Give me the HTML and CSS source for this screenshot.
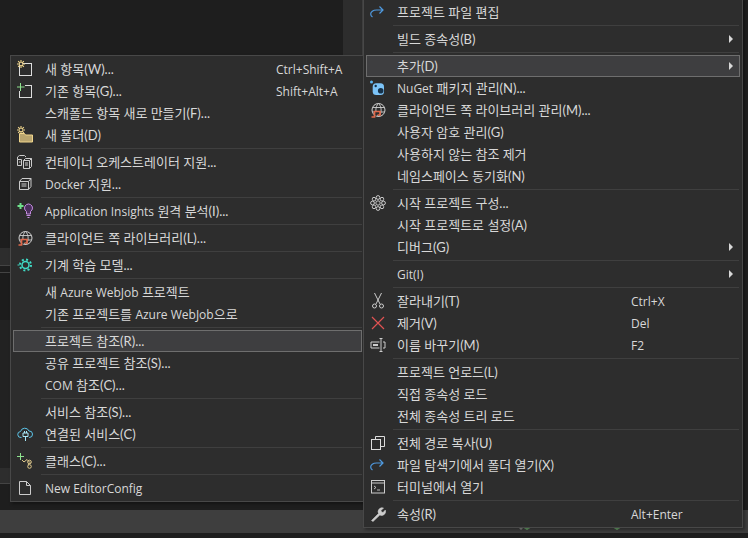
FILE: index.html
```html
<!DOCTYPE html>
<html lang="ko">
<head>
<meta charset="utf-8">
<title>프로젝트 컨텍스트 메뉴</title>
<link rel="stylesheet" href="styles.css">
</head>
<body>
<svg class="defs" width="0" height="0" aria-hidden="true">
  <defs>
    <symbol id="spark" viewBox="0 0 7 7"><path d="M3.500 0v7M0 3.500h7M1 1l5 5M6 1l-5 5" stroke="#f0d58c" stroke-width="1" fill="none"/><circle cx="3.500" cy="3.500" r="1.100" fill="#2d2d2d"/></symbol>
    <symbol id="arrow" viewBox="0 0 16 16"><path d="M13 6H6.500C3 6 .7 8 .7 10c0 1.300.7 2.300 1.800 3M9.500 2.500L13 6 9.500 9.500" fill="none" stroke="#4f9ae0" stroke-width="1.200"/></symbol>
    <symbol id="client" viewBox="0 0 16 16"><circle cx="8.500" cy="8" r="6.500" fill="none" stroke="#d0d0d0"/><path d="M2.500 5.500h12M2.500 10h12M8.500 1.500c-3.500 3-3.500 10 0 13M8.500 1.500c3.500 3 3.500 10 0 13" fill="none" stroke="#d0d0d0" stroke-width=".9"/><path d="M1.500 15h3V9.500H10V13H7.500" fill="#2d2d2d" stroke="#e0684a" stroke-width="1.700"/></symbol>
    <symbol id="ring" viewBox="0 0 4 4"><circle cx="2" cy="2" r="1.500" fill="none" stroke="#ccc" stroke-width=".8"/></symbol>
  </defs>
</svg>
<div class="desk">
  <div class="top">
    <div class="top-dark"></div>
    <div class="top-strip"></div>
  </div>
  <div class="edge">
    <div class="e-a"></div><div class="e-b"></div><div class="e-c"></div><div class="e-d"></div><div class="e-a e-e"></div>
  </div>
  <div class="band"><i class="mark gray"></i><i class="mark green"></i><i class="mark green m2"></i></div>
</div>

<nav class="menu menu-left">
  <div class="row"><span class="ico"><svg width="16" height="16" viewBox="0 0 16 16"><rect x="2.500" y="2.500" width="12" height="12" fill="#2d2d2d" stroke="#ddd"/><use href="#spark" x="0" y="-1" width="8" height="8"/></svg></span><span class="lbl">새 항목(W)...</span><span class="key lat">Ctrl+Shift+A</span></div>
  <div class="row"><span class="ico"><svg width="16" height="16" viewBox="0 0 16 16"><rect x="2.500" y="2.500" width="12" height="12" fill="#2d2d2d" stroke="#ddd"/><rect x="0" y="1" width="8" height="7" fill="#2d2d2d"/><path d="M3.500 0v8M0 4h7.500" stroke="#8ee28e" stroke-width="1" fill="none"/></svg></span><span class="lbl">기존 항목(G)...</span><span class="key lat">Shift+Alt+A</span></div>
  <div class="row"><span class="ico"></span><span class="lbl">스캐폴드 항목 새로 만들기(F)...</span></div>
  <div class="row"><span class="ico"><svg width="16" height="16" viewBox="0 0 16 16"><path d="M2.500 6.500h5l1 1.500h7v7h-13z" fill="#b9a56f" stroke="#f0d58c"/><use href="#spark" x="0" y="-1" width="8" height="8"/></svg></span><span class="lbl">새 폴더(D)</span></div>
  <div class="sep"></div>
  <div class="row"><span class="ico"><svg width="16" height="16" viewBox="0 0 16 16" fill="none" stroke="#ccc"><path d="M.5 5.500V3l2-1.500h5l1.500 1.500"/><path d="M.5 5.500h4v6h-4zM6.500 6.500h6v8h-6zM6.500 6.500l2-2h6v8l-2 2M12.500 6.500l2-2M8 9h3M8 11h3M2 8h1.500"/></svg></span><span class="lbl">컨테이너 오케스트레이터 지원...</span></div>
  <div class="row"><span class="ico"><svg width="16" height="16" viewBox="0 0 16 16" fill="none" stroke="#ccc"><path d="M2.500 5.500h9v8h-9zM2.500 5.500l2.500-3h9v8l-2.500 3M11.500 5.500l2.500-3M4.500 8h5M4.500 10h5"/></svg></span><span class="lbl"><span class="lat">Docker</span> 지원...</span></div>
  <div class="sep"></div>
  <div class="row"><span class="ico"><svg width="16" height="16" viewBox="0 0 16 16"><path d="M3.500 0v6M.5 3h6" stroke="#6fe08c" stroke-width="2" fill="none"/><path d="M7.500 5a4 4 0 1 1 6 3.500v2.500h-4V8.500A4 4 0 0 1 7.500 5z" fill="#4a2f5c" stroke="#c48be0"/><path d="M9.500 12.500h4M10.500 14.500h2" stroke="#c48be0"/></svg></span><span class="lbl"><span class="lat">Application Insights</span> 원격 분석(I)...</span></div>
  <div class="sep"></div>
  <div class="row"><span class="ico"><svg width="16" height="16"><use href="#client"/></svg></span><span class="lbl">클라이언트 쪽 라이브러리(L)...</span></div>
  <div class="sep"></div>
  <div class="row"><span class="ico"><svg width="16" height="16" viewBox="0 0 16 16" fill="none" stroke="#3fd9c4"><circle cx="8.500" cy="8" r="5.500" stroke-width="2" stroke-dasharray="2 2.300"/><circle cx="8.500" cy="8" r="3.500" stroke-width="1.500"/><path d="M.5 8h2"/></svg></span><span class="lbl">기계 학습 모델...</span></div>
  <div class="sep"></div>
  <div class="row"><span class="ico"></span><span class="lbl">새 <span class="lat">Azure WebJob</span> 프로젝트</span></div>
  <div class="row"><span class="ico"></span><span class="lbl">기존 프로젝트를 <span class="lat">Azure WebJob</span>으로</span></div>
  <div class="sep"></div>
  <div class="row active"><span class="ico"></span><span class="lbl">프로젝트 참조(R)...</span></div>
  <div class="row"><span class="ico"></span><span class="lbl">공유 프로젝트 참조(S)...</span></div>
  <div class="row"><span class="ico"></span><span class="lbl"><span class="lat">COM</span> 참조(C)...</span></div>
  <div class="sep"></div>
  <div class="row"><span class="ico"></span><span class="lbl">서비스 참조(S)...</span></div>
  <div class="row"><span class="ico"><svg width="16" height="16" viewBox="0 0 16 16"><path d="M4.500 11.500H4a3 3 0 0 1-.5-6A4.500 4.500 0 0 1 12 5a3.200 3.200 0 0 1 .5 6.500H12" fill="none" stroke="#5cc4e8"/><path d="M6 7v3.500h5V7zM7.500 5v2M9.500 5v2M8.500 10.500V15" fill="none" stroke="#a8e8f8"/></svg></span><span class="lbl">연결된 서비스(C)</span></div>
  <div class="sep"></div>
  <div class="row"><span class="ico"><svg width="16" height="16" viewBox="0 0 16 16"><path d="M3.500 0v7M0 3.500h7" stroke="#8ee28e" fill="none"/><path d="M5 7l2 2 3-2.500M10 6.500l3 3-2 2.500" fill="none" stroke="#e0c98c"/><circle cx="12.500" cy="9" r="1.800" fill="none" stroke="#e0c98c"/><circle cx="12.500" cy="13.500" r="1.800" fill="none" stroke="#e0c98c"/></svg></span><span class="lbl">클래스(C)...</span></div>
  <div class="sep"></div>
  <div class="row"><span class="ico"><svg width="16" height="16" viewBox="0 0 16 16"><path d="M2.500 1.500h7l4 4v9h-11z" fill="#2d2d2d" stroke="#ccc"/><path d="M9.500 1.500v4h4" fill="none" stroke="#ccc"/></svg></span><span class="lbl lat">New EditorConfig</span></div>
</nav>

<nav class="menu menu-right">
  <div class="row"><span class="ico"><svg width="16" height="16"><use href="#arrow"/></svg></span><span class="lbl">프로젝트 파일 편집</span></div>
  <div class="sep"></div>
  <div class="row"><span class="ico"></span><span class="lbl">빌드 종속성(B)</span><i class="more"></i></div>
  <div class="sep"></div>
  <div class="row active"><span class="ico"></span><span class="lbl">추가(D)</span><i class="more"></i></div>
  <div class="row"><span class="ico"><svg width="16" height="16" viewBox="0 0 16 16"><circle cx="1.500" cy="2" r="1.500" fill="#5cb4f0"/><rect x="2.700" y="3.300" width="11.300" height="11.700" rx="3.500" fill="#7cc4f8"/><circle cx="10.700" cy="10.700" r="2.800" fill="#16324a"/><circle cx="5.700" cy="6" r="1.200" fill="#16324a"/></svg></span><span class="lbl"><span class="lat">NuGet</span> 패키지 관리(N)...</span></div>
  <div class="row"><span class="ico"><svg width="16" height="16"><use href="#client"/></svg></span><span class="lbl">클라이언트 쪽 라이브러리 관리(M)...</span></div>
  <div class="row"><span class="ico"></span><span class="lbl">사용자 암호 관리(G)</span></div>
  <div class="row"><span class="ico"></span><span class="lbl">사용하지 않는 참조 제거</span></div>
  <div class="row"><span class="ico"></span><span class="lbl">네임스페이스 동기화(N)</span></div>
  <div class="sep"></div>
  <div class="row"><span class="ico"><svg width="16" height="16" viewBox="0 0 16 16"><use href="#ring" x="5.500" y="0" width="5" height="5"/><use href="#ring" x="9.500" y="1.700" width="5" height="5"/><use href="#ring" x="11" y="5.500" width="5" height="5"/><use href="#ring" x="9.500" y="9.300" width="5" height="5"/><use href="#ring" x="5.500" y="11" width="5" height="5"/><use href="#ring" x="1.500" y="9.300" width="5" height="5"/><use href="#ring" x="0" y="5.500" width="5" height="5"/><use href="#ring" x="1.500" y="1.700" width="5" height="5"/><circle cx="8" cy="8" r="2.200" fill="none" stroke="#ccc"/></svg></span><span class="lbl">시작 프로젝트 구성...</span></div>
  <div class="row"><span class="ico"></span><span class="lbl">시작 프로젝트로 설정(A)</span></div>
  <div class="row"><span class="ico"></span><span class="lbl">디버그(G)</span><i class="more"></i></div>
  <div class="sep"></div>
  <div class="row"><span class="ico"></span><span class="lbl lat">Git(I)</span><i class="more"></i></div>
  <div class="sep"></div>
  <div class="row"><span class="ico"><svg width="16" height="16" viewBox="0 0 16 16" fill="none" stroke="#ccc"><path d="M4.500 0l5.500 11M11.500 0L6 11"/><circle cx="4.500" cy="13" r="2"/><circle cx="11.500" cy="13" r="2"/></svg></span><span class="lbl">잘라내기(T)</span><span class="key lat">Ctrl+X</span></div>
  <div class="row"><span class="ico"><svg width="16" height="16" viewBox="0 0 16 16"><path d="M2 2l12 12M14 2L2 14" stroke="#e05252" stroke-width="1.200" fill="none"/></svg></span><span class="lbl">제거(V)</span><span class="key lat">Del</span></div>
  <div class="row"><span class="ico"><svg width="16" height="16" viewBox="0 0 16 16" fill="none" stroke="#ccc"><path d="M9.500 5H1v6h8.500M13 5h2v6h-2"/><path d="M3 8h5" stroke-width="2"/><path d="M9.500 1.500h3M9.500 14.500h3M11 1.500v13"/></svg></span><span class="lbl">이름 바꾸기(M)</span><span class="key lat">F2</span></div>
  <div class="sep"></div>
  <div class="row"><span class="ico"></span><span class="lbl">프로젝트 언로드(L)</span></div>
  <div class="row"><span class="ico"></span><span class="lbl">직접 종속성 로드</span></div>
  <div class="row"><span class="ico"></span><span class="lbl">전체 종속성 트리 로드</span></div>
  <div class="sep"></div>
  <div class="row"><span class="ico"><svg width="16" height="16" viewBox="0 0 16 16" fill="none" stroke="#ddd"><path d="M5.500 4.500v-3h9v10h-4"/><rect x="1.500" y="4.500" width="9" height="10" fill="#2d2d2d"/></svg></span><span class="lbl">전체 경로 복사(U)</span></div>
  <div class="row"><span class="ico"><svg width="16" height="16"><use href="#arrow"/></svg></span><span class="lbl">파일 탐색기에서 폴더 열기(X)</span></div>
  <div class="row"><span class="ico"><svg width="16" height="16" viewBox="0 0 16 16" fill="none" stroke="#ccc"><rect x="1.500" y="1.500" width="13" height="12.500"/><path d="M1.500 4h13"/><path d="M4 7l2 1.500L4 10M7 11h3" stroke-width=".9"/></svg></span><span class="lbl">터미널에서 열기</span></div>
  <div class="sep"></div>
  <div class="row"><span class="ico"><svg width="16" height="16" viewBox="0 0 16 16"><path d="M1.500 14.500l7-7a4 4 0 0 1 5-5.500L11 4.500l.5 1.500 1.500.5 2.300-2.400a4 4 0 0 1-5.500 5L3 15.500z" fill="#ccc" stroke="#ccc" stroke-width=".6"/></svg></span><span class="lbl">속성(R)</span><span class="key lat">Alt+Enter</span></div>
</nav>
</body>
</html>
```
FILE: styles.css
```css
html, body { margin: 0; padding: 0; height: 100%; }
body {
  width: 748px;
  height: 538px;
  overflow: hidden;
  position: relative;
  background: #1e1e1e;
  color: #d8d8d8;
  font-family: "Lato", "Noto Sans CJK KR", sans-serif;
  font-size: 13px;
}
.defs { position: absolute; }
.desk { display: flex; flex-direction: column; height: 538px; }
.top { display: flex; height: 55px; flex: none; }
.top-dark { width: 343px; background: #1e1e1e; }
.top-strip { width: 19px; background: #2d2d2d; border-right: 1px solid #3f3f3f; }
.edge { width: 10px; height: 455px; flex: none; padding-top: 193px; box-sizing: border-box; display: flex; flex-direction: column; }
.e-a { height: 17px; background: #2d2d2d; border-bottom: 1px solid #444; flex: none; }
.e-b { height: 6px; background: #1e1e1e; border-bottom: 1px solid #444; flex: none; }
.e-c { height: 47px; background: #1c1c1c; flex: none; }
.e-d { height: 148px; background: #222; flex: none; }
.e-e { height: 15px; }
.band { position: relative; height: 23px; flex: none; background: #3e3e3e; }
.mark { position: absolute; top: 17px; width: 10px; height: 3px; clip-path: polygon(0 0, 100% 0, 50% 100%); }
.green { left: 522px; background: #6aa56a; }
.m2 { left: 612px; }
.gray { left: 518px; width: 6px; background: #8a8a8a; }

.menu {
  position: absolute;
  box-sizing: border-box;
  background: #2d2d2d;
  border: 1px solid #484848;
  box-shadow: 2px 2px 3px rgba(0, 0, 0, .35);
}
.menu-left { left: 10px; top: 55px; width: 354px; height: 447px; padding: 2px 1px 2px 2px; }
.menu-right { left: 363px; top: -2px; width: 380px; height: 530px; padding: 2px; }
.row {
  display: flex;
  align-items: center;
  height: 22px;
  box-sizing: border-box;
  white-space: nowrap;
  border: 1px solid transparent;
  position: relative;
}
.ico { flex: none; width: 31px; height: 16px; padding-left: 3px; box-sizing: border-box; display: block; }
.menu-right .ico { width: 30px; }
.ico svg { display: block; overflow: visible; }
.lbl { flex: 1; line-height: 20px; }
.key { flex: none; line-height: 20px; }
.lat { font-family: "Open Sans", "Noto Sans CJK KR", sans-serif; font-size: 12px; }
.lbl.lat, .key.lat { padding-top: 2px; }
.menu-left .key { width: 85px; }
.menu-right .key { width: 108px; }
.sep { height: 1px; margin: 2px 0 2px 28px; background: #3f3f3f; }
.menu-right .sep { margin: 2px 1px 2px 27px; }
.active { background: #3e3e40; border-color: #6e6e6e; }
.more {
  position: absolute;
  right: 6px;
  top: 6px;
  width: 0;
  height: 0;
  border-left: 4px solid #d8d8d8;
  border-top: 4px solid transparent;
  border-bottom: 4px solid transparent;
}
```
